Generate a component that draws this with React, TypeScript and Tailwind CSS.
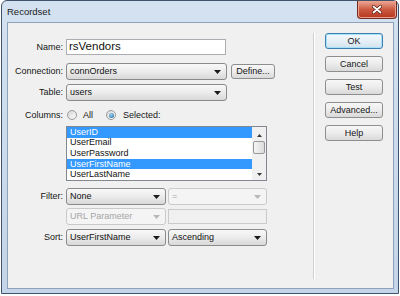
import type { ReactNode } from 'react'

function Arrow({ disabled }: { disabled?: boolean }) {
  return (
    <svg width="7" height="4" viewBox="0 0 7 4" className="shrink-0">
      <path d="M0 0h7L3.5 4z" fill={disabled ? '#b8b8b8' : '#1a1a1a'} />
    </svg>
  )
}

function Select({ value, width, disabled }: { value: string; width: string; disabled?: boolean }) {
  return (
    <div
      className={`flex h-[17px] items-center justify-between rounded-[3px] border pl-[3px] pr-[5px] ${width} ${
        disabled
          ? 'border-[#cacaca] bg-[#f4f4f4] text-[#a5a5a5]'
          : 'border-[#8b8b8b] bg-linear-to-b from-[#f8f8f8] via-[#ececec] to-[#d8d8d8] text-[#111]'
      }`}
    >
      <span className="leading-none">{value}</span>
      <Arrow disabled={disabled} />
    </div>
  )
}

function Button({ children, primary }: { children: ReactNode; primary?: boolean }) {
  return (
    <div
      className={`flex h-[16px] w-[58px] items-center justify-center rounded-[3px] border leading-none ${
        primary
          ? 'border-[#3c7fb1] bg-linear-to-b from-[#f2f8fc] via-[#e6f0f7] to-[#d3e3ef] shadow-[inset_0_0_0_1px_#a8e1f8]'
          : 'border-[#8e8e8e] bg-linear-to-b from-[#f7f7f7] via-[#ececec] to-[#d9d9d9]'
      }`}
    >
      {children}
    </div>
  )
}

function Row({ label, className, children }: { label: string; className?: string; children: ReactNode }) {
  return (
    <div className={`flex items-center ${className ?? ''}`}>
      <div className="w-[55px] text-right leading-none">{label}</div>
      <div className="ml-[3px] flex items-center">{children}</div>
    </div>
  )
}

function Radio({ checked }: { checked?: boolean }) {
  return (
    <div className="flex h-[10px] w-[10px] items-center justify-center rounded-full border border-[#9a9a9a] bg-linear-to-br from-[#d8d8d8] to-[#fbfbfb]">
      {checked && (
        <div className="h-[5px] w-[5px] rounded-full bg-[radial-gradient(circle_at_40%_35%,#9ad6f5,#1d5e96)]" />
      )}
    </div>
  )
}

const columns = [
  { name: 'UserID', selected: true },
  { name: 'UserEmail', selected: false },
  { name: 'UserPassword', selected: false },
  { name: 'UserFirstName', selected: true },
  { name: 'UserLastName', selected: false },
]

export default function App() {
  return (
    <div className="h-[296px] w-[400px] overflow-hidden bg-white font-['Liberation_Sans',Arial,sans-serif] text-[9px] text-[#151515]">
      <div className="ml-[1px] flex h-[294px] w-[398px] flex-col rounded-t-[6px] border border-[#40536b] bg-linear-to-b from-[#d3e1f0] to-[#c4d5e9]">
        {/* Title bar */}
        <div className="flex h-[21px] items-start">
          <div className="mt-[6px] ml-[5px] text-[9.5px] leading-none text-[#1b1b1b]">Recordset</div>
          <div className="mr-[1px] ml-auto flex h-[18px] w-[40px] items-center justify-center rounded-b-[4px] border border-t-0 border-[#6e2b20] bg-linear-to-b from-[#e9a896] via-[#cc5a41] to-[#b5341c] shadow-[inset_0_0_0_1px_#eea08c]">
            <svg width="10" height="9" viewBox="0 0 10 9">
              <path d="M1.5 1.5l7 6M8.5 1.5l-7 6" stroke="#5a1a10" strokeWidth="3.2" strokeLinecap="round" />
              <path d="M1.5 1.5l7 6M8.5 1.5l-7 6" stroke="#fff" strokeWidth="1.8" strokeLinecap="round" />
            </svg>
          </div>
        </div>

        {/* Client area */}
        <div className="mr-[4px] mb-[4px] ml-[5px] flex flex-1 border border-[#8ea3bb] bg-[#f0f0f0]">
          <div className="w-[305px] pt-[16px]">
            <Row label="Name:">
              <div className="flex h-[16px] w-[160px] items-center border border-[#abadb3] bg-white pl-[2px] text-[11.5px] leading-none text-[#111]">
                rsVendors
              </div>
            </Row>
            <Row label="Connection:" className="mt-[8px]">
              <Select value="connOrders" width="w-[161px]" />
              <div className="ml-[4px] flex h-[15px] w-[44px] items-center justify-center rounded-[3px] border border-[#8e8e8e] bg-linear-to-b from-[#f7f7f7] via-[#ececec] to-[#d9d9d9] leading-none">
                Define...
              </div>
            </Row>
            <Row label="Table:" className="mt-[4px]">
              <Select value="users" width="w-[161px]" />
            </Row>
            <Row label="Columns:" className="mt-[7px] h-[14px]">
              <div className="ml-[1px] flex items-center">
                <Radio />
                <span className="ml-[6px] leading-none">All</span>
                <div className="ml-[13px]">
                  <Radio checked />
                </div>
                <span className="ml-[7px] leading-none">Selected:</span>
              </div>
            </Row>
            <div className="mt-[4px] ml-[58px] flex h-[55px] w-[201px] border border-[#828790] bg-white">
              <div className="flex flex-1 flex-col overflow-hidden">
                {columns.map((c) => (
                  <div
                    key={c.name}
                    className={`flex h-[10.6px] shrink-0 items-center pl-[3px] leading-none ${
                      c.selected ? 'bg-[#3399ff] text-white' : 'text-[#111]'
                    }`}
                  >
                    {c.name}
                  </div>
                ))}
              </div>
              <div className="flex w-[14px] flex-col items-center bg-[#f0f0f0]">
                <div className="flex h-[10px] items-end">
                  <svg width="5" height="3" viewBox="0 0 5 3">
                    <path d="M0 3h5L2.5 0z" fill="#3a3a3a" />
                  </svg>
                </div>
                <div className="mt-[4px] h-[13px] w-[12px] rounded-[2px] border border-[#979797] bg-linear-to-r from-[#f4f4f4] to-[#dcdcdc]" />
                <div className="mt-auto mb-[4px]">
                  <svg width="5" height="3" viewBox="0 0 5 3">
                    <path d="M0 0h5L2.5 3z" fill="#3a3a3a" />
                  </svg>
                </div>
              </div>
            </div>
            <Row label="Filter:" className="mt-[7px]">
              <Select value="None" width="w-[100px]" />
              <div className="ml-[2px]">
                <Select value="=" width="w-[99px]" disabled />
              </div>
            </Row>
            <Row label="" className="mt-[3px]">
              <Select value="URL Parameter" width="w-[100px]" disabled />
              <div className="ml-[2px] h-[15px] w-[99px] border border-[#cacaca] bg-[#f0f0f0]" />
            </Row>
            <Row label="Sort:" className="mt-[4px]">
              <Select value="UserFirstName" width="w-[100px]" />
              <div className="ml-[2px]">
                <Select value="Ascending" width="w-[99px]" />
              </div>
            </Row>
          </div>

          {/* Divider */}
          <div className="mt-[10px] mb-[9px] flex">
            <div className="w-[1px] bg-[#d0d0d0]" />
            <div className="w-[1px] bg-white" />
          </div>

          {/* Buttons */}
          <div className="ml-[10px] flex flex-col gap-[7px] pt-[10px]">
            <Button primary>OK</Button>
            <Button>Cancel</Button>
            <Button>Test</Button>
            <Button>Advanced...</Button>
            <Button>Help</Button>
          </div>
        </div>
      </div>
    </div>
  )
}
